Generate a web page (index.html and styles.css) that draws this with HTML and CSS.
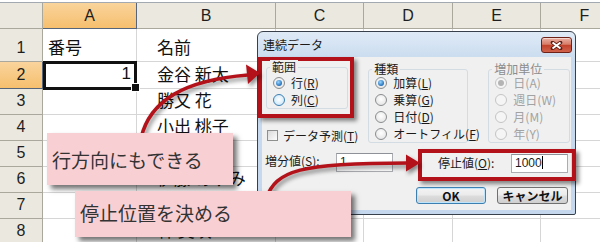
FILE: index.html
```html
<!DOCTYPE html>
<html lang="ja">
<head>
  <meta charset="UTF-8">
  <meta name="viewport" content="width=device-width, initial-scale=1.0">
  <title>連続データ</title>
  <link rel="stylesheet" href="styles.css">
</head>
<body>
  <div class="screen">
    <!-- worksheet -->
    <div class="sheet">
      <div class="strip"></div>

      <div class="hd corner"></div>
      <div class="hd col on">A</div>
      <div class="hd col">B</div>
      <div class="hd col">C</div>
      <div class="hd col">D</div>
      <div class="hd col">E</div>
      <div class="hd col">F</div>

      <div class="hd row">1</div>
      <div class="cell">番号</div>
      <div class="cell name">名前</div>
      <div class="cell"></div><div class="cell"></div><div class="cell"></div><div class="cell"></div>

      <div class="hd row on">2</div>
      <div class="cell num sel">1</div>
      <div class="cell name">金谷 新太</div>
      <div class="cell"></div><div class="cell"></div><div class="cell"></div><div class="cell"></div>

      <div class="hd row">3</div>
      <div class="cell"></div>
      <div class="cell name">勝又 花</div>
      <div class="cell"></div><div class="cell"></div><div class="cell"></div><div class="cell"></div>

      <div class="hd row">4</div>
      <div class="cell"></div>
      <div class="cell name">小出 桃子</div>
      <div class="cell"></div><div class="cell"></div><div class="cell"></div><div class="cell"></div>

      <div class="hd row">5</div>
      <div class="cell"></div>
      <div class="cell name"></div>
      <div class="cell"></div><div class="cell"></div><div class="cell"></div><div class="cell"></div>

      <div class="hd row">6</div>
      <div class="cell"></div>
      <div class="cell name">伊藤 あゆみ</div>
      <div class="cell"></div><div class="cell"></div><div class="cell"></div><div class="cell"></div>

      <div class="hd row">7</div>
      <div class="cell"></div>
      <div class="cell name"></div>
      <div class="cell"></div><div class="cell"></div><div class="cell"></div><div class="cell"></div>

      <div class="hd row">8</div>
      <div class="cell"></div>
      <div class="cell name">林 美咲</div>
      <div class="cell"></div><div class="cell"></div><div class="cell"></div><div class="cell"></div>
    </div>

    <!-- 連続データ dialog -->
    <div class="dialog">
      <div class="dialog-title">
        <span>連続データ</span>
        <button class="close">
          <svg width="13" height="9" viewBox="0 0 13 9">
            <path d="M2.5 1.5 L10.5 7.5 M10.5 1.5 L2.5 7.5" stroke="#5a1d14" stroke-width="3.6" stroke-linecap="round"/>
            <path d="M2.5 1.5 L10.5 7.5 M10.5 1.5 L2.5 7.5" stroke="#fff" stroke-width="2"/>
          </svg>
        </button>
      </div>

      <div class="dialog-body">
        <div class="top">
          <div class="left-col">
            <div class="mark mark-range">
              <div class="group">
                <div class="group-title">範囲</div>
                <div class="opt"><span class="radio on"></span>行(<u>R</u>)</div>
                <div class="opt"><span class="radio hover"></span>列(<u>C</u>)</div>
              </div>
            </div>
            <div class="opt check"><span class="checkbox"></span>データ予測(<u>T</u>)</div>
          </div>

          <div class="group kind">
            <div class="group-title">種類</div>
            <div class="opt"><span class="radio on"></span>加算(<u>L</u>)</div>
            <div class="opt"><span class="radio"></span>乗算(<u>G</u>)</div>
            <div class="opt"><span class="radio"></span>日付(<u>D</u>)</div>
            <div class="opt"><span class="radio"></span>オートフィル(<u>F</u>)</div>
          </div>

          <div class="group unit">
            <div class="group-title">増加単位</div>
            <div class="opt"><span class="radio on"></span>日(A)</div>
            <div class="opt"><span class="radio"></span>週日(W)</div>
            <div class="opt"><span class="radio"></span>月(M)</div>
            <div class="opt"><span class="radio"></span>年(Y)</div>
          </div>
        </div>

        <div class="values">
          <span class="field-label step">増分値(<u>S</u>):</span>
          <span class="input step-input">1</span>
          <div class="mark mark-stop">
            <span class="field-label">停止値(<u>O</u>):</span>
            <span class="input stop-input">1000<i class="caret"></i></span>
          </div>
        </div>

        <div class="buttons">
          <button class="btn default">OK</button>
          <button class="btn">キャンセル</button>
        </div>
      </div>
    </div>

    <!-- red arrows -->
    <svg class="arrows" width="600" height="242" viewBox="0 0 600 242">
      <path d="M141 138 C 150 100, 185 80, 248 75" fill="none" stroke="#b3121a" stroke-width="3.5"/>
      <polygon points="260,73 246,64.5 248,84" fill="#b3121a"/>
      <path d="M266 199 C 276 170, 300 163, 408 163" fill="none" stroke="#b3121a" stroke-width="3.5"/>
      <polygon points="420,163 406,154.5 406,171.5" fill="#b3121a"/>
    </svg>

    <div class="callout callout-row">行方向にもできる</div>
    <div class="callout callout-stop">停止位置を決める</div>
  </div>
</body>
</html>
```

FILE: styles.css
```css
/* Reset */
* {
  margin: 0;
  padding: 0;
  box-sizing: border-box;
}

body {
  font-family: "Noto Sans CJK JP", sans-serif;
  background-color: #fff;
}

.screen {
  position: relative;
  width: 600px;
  height: 242px;
  overflow: hidden;
}

/* Worksheet */
.sheet {
  display: grid;
  grid-template-columns: 43px 94px 139px 88px 89px 88px 88px;
  grid-template-rows: 3px 26px 33px 27px repeat(6, 26px);
  width: 629px;
}

.strip {
  grid-column: 1 / -1;
  background-color: #fff;
  border-bottom: 1px solid #a3a9b1;
}

.hd {
  background-color: #ebe9df;
  border-right: 1px solid #aaa79d;
  border-bottom: 1px solid #aaa79d;
  font-family: "Liberation Sans", Arial, sans-serif;
  font-size: 16px;
  color: #1e1e1e;
  display: flex;
  justify-content: center;
  align-items: center;
}

.hd.row {
  align-items: flex-end;
  padding-bottom: 3px;
  line-height: 20px;
}

.hd.on {
  background: linear-gradient(#f9d49c, #f6bf6e);
  border-right-color: #56657a;
  border-bottom-color: #56657a;
}

.cell {
  border-right: 1px solid #d6d6d6;
  border-bottom: 1px solid #d6d6d6;
  font-size: 17px;
  line-height: 24px;
  color: #111;
  display: flex;
  align-items: flex-end;
  padding: 0 0 2px 5px;
  white-space: nowrap;
}

.cell.name {
  padding-left: 20px;
}

.cell.num {
  justify-content: flex-end;
  padding-right: 5px;
  font-family: "Liberation Sans", Arial, sans-serif;
}

/* active cell A2 */
.cell.sel {
  position: relative;
}

.cell.sel::after {
  content: "";
  position: absolute;
  top: -1px;
  left: 0;
  right: -1px;
  bottom: -2px;
  border: 3px solid #111;
}

.cell.sel::before {
  content: "";
  position: absolute;
  right: -4px;
  bottom: -4px;
  width: 7px;
  height: 7px;
  background-color: #111;
  border: 1px solid #fff;
  z-index: 1;
}

/* Dialog */
.dialog {
  position: absolute;
  left: 257px;
  top: 31px;
  width: 319px;
  height: 184px;
  border: 1px solid #37404b;
  border-radius: 6px 6px 2px 2px;
  background: linear-gradient(#dfeaf6, #c9dbef 28px, #c4d7ec);
  padding: 0 4px 4px 4px;
  display: flex;
  flex-direction: column;
  font-size: 12px;
  color: #1b1b1b;
  z-index: 1;
}

.dialog-title {
  height: 25px;
  display: flex;
  align-items: flex-start;
  padding: 5px 0 0 1px;
  line-height: 16px;
}

.close {
  margin-left: auto;
  margin-right: -1px;
  width: 31px;
  height: 16px;
  border: 1px solid #6d2117;
  border-radius: 3px;
  background: linear-gradient(#eab1a4, #d77d69 45%, #c2432c 52%, #d0624c);
  box-shadow: inset 0 1px 0 rgba(255, 255, 255, 0.5);
  display: flex;
  justify-content: center;
  align-items: center;
}

.dialog-body {
  flex: 1;
  background-color: #f0f0f0;
}

.top {
  display: flex;
  align-items: flex-start;
}

/* red highlight frames */
.mark {
  border: 4px solid #b3121a;
  box-shadow: 3px 3px 4px rgba(0, 0, 0, 0.45);
}

.mark-range {
  margin-left: -4px;
  width: 96px;
  padding: 6px 2px 5px 4px;
}

/* group boxes */
.group {
  border: 1px solid #d3dce3;
  border-radius: 3px;
  padding-left: 6px;
}

.group-title {
  width: fit-content;
  margin: -8px 0 -2px -3px;
  padding: 0 2px;
  background-color: #f0f0f0;
  line-height: 14px;
}

.mark-range .group-title {
  margin-bottom: 0;
}

.kind {
  margin: 12px 0 0 10px;
  width: 100px;
}

.unit {
  margin: 12px 0 0 20px;
  width: 82px;
  color: #a2a2a2;
}

.unit .group-title {
  color: #8c8c8c;
}

.opt {
  display: flex;
  align-items: center;
  height: 17px;
  line-height: 13px;
  white-space: nowrap;
}

.radio {
  position: relative;
  flex: none;
  width: 12px;
  height: 12px;
  margin-right: 6px;
  border: 1px solid #8a8c8e;
  border-radius: 50%;
  background: radial-gradient(circle at 50% 40%, #fff, #dedede);
}

.radio.on::after {
  content: "";
  position: absolute;
  inset: 2px;
  border-radius: 50%;
  background: radial-gradient(circle at 40% 35%, #9ad6ff, #2a77c0 65%, #14528d);
}

.radio.hover {
  border-color: #3c7fb1;
  background: radial-gradient(circle at 50% 45%, #fff, #bfe2f8);
}

.unit .radio {
  border-color: #c4c4c4;
  background: #f5f5f5;
}

.unit .radio.on::after {
  background: #b4b4b4;
}

.check {
  margin-top: 9px;
  padding-left: 5px;
}

.checkbox {
  flex: none;
  width: 11px;
  height: 11px;
  margin-right: 5px;
  border: 1px solid #8e8f8f;
  background: linear-gradient(135deg, #dadada, #fdfdfd);
}

/* increment / stop values */
.values {
  display: flex;
  align-items: flex-start;
  margin-top: 5px;
}

.field-label {
  line-height: 16px;
  white-space: nowrap;
}

.field-label.step {
  margin: 4px 0 0 3px;
  width: 71px;
}

.input {
  width: 57px;
  height: 19px;
  border: 1px solid #abadb3;
  border-top-color: #8e9197;
  background-color: #fff;
  padding-left: 3px;
  line-height: 17px;
  font-family: "Liberation Sans", Arial, sans-serif;
  font-size: 12px;
}

.step-input {
  margin-top: 4px;
}

.mark-stop {
  margin-left: auto;
  margin-right: -5px;
  width: 158px;
  height: 32px;
  padding: 0 4px 0 16px;
  display: flex;
  align-items: flex-start;
}

.mark-stop .field-label {
  margin-top: 2px;
}

.stop-input {
  margin-left: auto;
  margin-top: 1px;
}

.caret {
  display: inline-block;
  width: 1px;
  height: 13px;
  background-color: #000;
  vertical-align: -2px;
}

/* buttons */
.buttons {
  display: flex;
  justify-content: flex-end;
  gap: 11px;
  margin-top: 6px;
  padding-right: 3px;
}

.btn {
  width: 71px;
  height: 17px;
  border: 1px solid #707070;
  border-radius: 3px;
  background: linear-gradient(#f3f3f3, #ebebeb 48%, #dddddd 52%, #cfcfcf);
  font-family: "Noto Sans CJK JP", sans-serif;
  font-size: 12px;
  line-height: 15px;
  color: #111;
  font-weight: 600;
}

.btn.default {
  width: 70px;
  border-color: #3c7fb1;
  box-shadow: inset 0 0 0 1px #bde4fa;
}

/* arrows and callouts */
.arrows {
  position: absolute;
  left: 0;
  top: 0;
  z-index: 2;
  filter: drop-shadow(2px 3px 2px rgba(0, 0, 0, 0.45));
}

.callout {
  position: absolute;
  z-index: 3;
  background-color: #f8d0d3;
  box-shadow: 4px 4px 5px rgba(0, 0, 0, 0.55);
  font-size: 19px;
  color: #333;
  display: flex;
  align-items: center;
  padding-left: 5px;
  white-space: nowrap;
}

.callout-row {
  left: 47px;
  top: 133px;
  width: 186px;
  height: 52px;
}

.callout-stop {
  left: 75px;
  top: 191px;
  width: 276px;
  height: 46px;
  padding-bottom: 4px;
}
```
